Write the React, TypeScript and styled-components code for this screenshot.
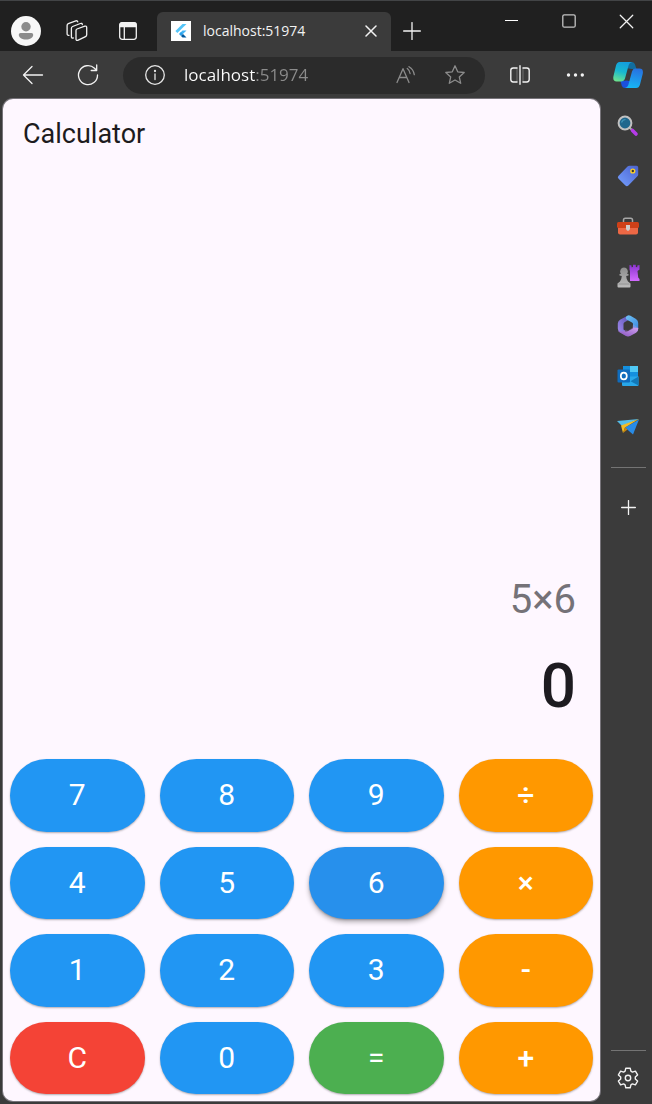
import React, { useState } from "react";
import styled, { createGlobalStyle } from "styled-components";

const GlobalStyle = createGlobalStyle`
  *, *::before, *::after { box-sizing: border-box; }
  html { background: #3b3b3b; }
  body { margin: 0; font-family: "Open Sans", "Noto Sans", sans-serif; }
  button { font: inherit; color: inherit; border: 0; padding: 0; background: none; cursor: pointer; }
  svg { display: block; flex: none; }
`;

const Browser = styled.div`
  display: flex;
  flex-direction: column;
  min-height: 100vh;
  background: #3b3b3b;
  color: #f2f2f2;
`;

const TabStrip = styled.header`
  display: flex;
  height: 51px;
  background: #202020;
  border-top: 1px solid #424446;
`;

const StripButton = styled.button<{ $width?: number }>`
  display: flex;
  align-items: center;
  justify-content: center;
  width: ${(p) => p.$width ?? 51}px;
  padding-top: 10px;
`;

const Tab = styled.div`
  display: flex;
  align-items: center;
  flex: 0 1 234px;
  min-width: 0;
  margin: 11px 0 0 4px;
  padding: 0 10px 2px 14px;
  background: #3b3b3b;
  border-radius: 6px 6px 0 0;
`;

const TabTitle = styled.span`
  flex: 1;
  min-width: 0;
  margin-left: 12px;
  overflow: hidden;
  white-space: nowrap;
  font-size: 14px;
  line-height: 20px;
`;

const TabClose = styled.button`
  display: grid;
  place-items: center;
  width: 20px;
  height: 20px;
`;

const WindowControls = styled.div`
  display: flex;
  gap: 5px;
  height: 40px;
  margin-left: auto;
`;

const WindowButton = styled.button`
  display: grid;
  place-items: center;
  width: 52px;
`;

const Toolbar = styled.nav`
  display: flex;
  align-items: center;
  height: 48px;
  padding-left: 5px;
`;

const ToolButton = styled.button<{ $width: number }>`
  display: grid;
  place-items: center;
  flex: none;
  width: ${(p) => p.$width}px;
  height: 40px;
`;

const AddressBar = styled.div`
  display: flex;
  align-items: center;
  flex: 1;
  min-width: 0;
  height: 37px;
  margin: 0 9px 0 8px;
  padding: 0 6px 0 22px;
  border-radius: 19px;
  background: #2b2b2b;
  color: #8c8c8c;
`;

const AddressInput = styled.input`
  flex: 1;
  min-width: 0;
  height: 28px;
  margin-left: 19px;
  padding: 0 0 2px;
  border: 0;
  outline: 0;
  font-family: inherit;
  font-size: 17px;
  color: #ffffff;
  background: linear-gradient(90deg, #ffffff 72px, #8c8c8c 72px);
  background-clip: text;
  -webkit-text-fill-color: transparent;
`;

const Content = styled.div`
  display: flex;
  flex: 1;
`;

const Page = styled.main`
  display: flex;
  flex-direction: column;
  flex: 1;
  min-width: 0;
  margin: 0 0 3px 3px;
  border-radius: 10px;
  background: #fef7ff;
  box-shadow: 0 0 0 1px #77747a;
  color: #1d1b20;
  font-family: Roboto, sans-serif;
`;

const AppTitle = styled.h1`
  margin: 0;
  padding: 19px 20px;
  font-size: 27px;
  font-weight: 400;
  line-height: 32px;
`;

const Display = styled.section`
  display: flex;
  flex-direction: column;
  justify-content: flex-end;
  align-items: flex-end;
  flex: 1;
  padding: 24px;
`;

const Expression = styled.div`
  font-size: 40px;
  line-height: 48px;
  color: #757278;
`;

const Result = styled.output`
  margin: 26px 0 6px;
  font-size: 62px;
  font-weight: 500;
  line-height: 72px;
`;

const Keypad = styled.section`
  display: grid;
  grid-template-columns: repeat(4, 1fr);
  grid-auto-rows: 1fr;
  gap: 15px;
  height: 349px;
  padding: 7px;
`;

const tones = {
  digit: "#2196f3",
  operator: "#ff9800",
  clear: "#f44336",
  equals: "#4caf50",
};
type Tone = keyof typeof tones;

const Key = styled.button<{ $tone: Tone; $active: boolean }>`
  border-radius: 40px;
  background: ${(p) => (p.$active ? "#2790ec" : tones[p.$tone])};
  color: #ffffff;
  font-size: 30px;
  font-weight: ${(p) => (p.$tone === "operator" ? 500 : 400)};
  line-height: 36px;
  box-shadow: ${(p) =>
    p.$active
      ? "0 3px 5px rgba(0, 0, 0, 0.3), 0 1px 2px rgba(0, 0, 0, 0.2)"
      : "0 1px 2px rgba(0, 0, 0, 0.3)"};
`;

const Sidebar = styled.aside`
  display: flex;
  flex-direction: column;
  align-items: center;
  width: 52px;
  padding: 2px 0 1px 4px;
`;

const SideLink = styled.a`
  display: grid;
  place-items: center;
  width: 48px;
  height: 50px;
`;

const SideButton = styled.button`
  display: grid;
  place-items: center;
  width: 48px;
  height: 50px;
`;

const Rule = styled.hr<{ $bottom?: boolean }>`
  width: 35px;
  height: 1px;
  margin: ${(p) => (p.$bottom ? "auto 0 2px" : "16px 0 14px")};
  border: 0;
  background: #747474;
`;

const line = { fill: "none", stroke: "currentColor", strokeLinecap: "round", strokeLinejoin: "round" } as const;

const Avatar = () => (
  <svg width="30" height="30" viewBox="0 0 30 30">
    <circle cx="15" cy="15" r="15" fill="#f7f7f7" />
    <circle cx="15" cy="10.800" r="4.700" fill="#8b8b8b" />
    <path d="M9.500 17h11a1.700 1.700 0 0 1 1.700 1.700c0 3-3.200 4.800-7.200 4.800s-7.200-1.800-7.200-4.800A1.700 1.700 0 0 1 9.500 17z" fill="#8b8b8b" />
  </svg>
);

const Workspaces = () => (
  <svg width="22" height="22" viewBox="0 0 22 22" {...line} strokeWidth="1.300">
    <path d="M11 9 18.800 6.200q1.900-.5 1.900 1.300v7.300q0 1.200-1.200 1.800l-7.800 3.700q-1.700.6-1.700-1.200v-8.500q0-1.200 1-1.600z" />
    <path d="M7.300 18q-1.900.4-1.900-1.300V8.200q0-1.200 1.200-1.700l7.800-3q1.700-.6 1.900 1" />
    <path d="M3 15.300q-1.900.3-1.900-1.500V5.400q0-1.200 1.200-1.700L9.800.9q1.500-.5 1.900.9" />
  </svg>
);

const TabActions = () => (
  <svg width="18" height="18" viewBox="0 0 18 18" {...line} strokeWidth="1.300">
    <rect x=".7" y=".7" width="16.600" height="16.600" rx="2.500" />
    <path d="M1 4.500V2.500Q1 1 2.500 1h13Q17 1 17 2.500v2z" fill="currentColor" />
    <path d="M5.300 4.500V17" />
  </svg>
);

const Flutter = () => (
  <svg width="20" height="20" viewBox="0 0 20 20">
    <path fill="#fff" d="M0 0h20v20H0z" />
    <path fill="#54c5f8" d="M11.500 3h4L6.400 12.100l-2-2z" />
    <path fill="#42b4f5" d="M11.500 9.500h4l-3.600 3.600-3.300-.6z" />
    <path fill="#29a0ea" d="m8 13 2-2 2 2-2 2z" />
    <path fill="#01579b" d="m10 15 2-2 3.500 3.500h-4z" />
  </svg>
);

const Cross = ({ size, width = 1.3 }: { size: number; width?: number }) => (
  <svg width={size} height={size} viewBox="0 0 12 12" {...line} strokeWidth={width}>
    <path d="m1 1 10 10M11 1 1 11" />
  </svg>
);

const Plus = ({ size }: { size: number }) => (
  <svg width={size} height={size} viewBox={`0 0 ${size} ${size}`} {...line} strokeWidth="1.300">
    <path d={`M${size / 2} .6V${size - 0.6}M.6 ${size / 2}H${size - 0.6}`} />
  </svg>
);

const Back = () => (
  <svg width="22" height="20" viewBox="0 0 22 20" {...line} strokeWidth="1.300">
    <path d="M20.500 10H1.500M10 1.500 1.500 10l8.500 8.500" />
  </svg>
);

const Reload = () => (
  <svg width="22" height="22" viewBox="0 0 22 22" {...line} strokeWidth="1.300">
    <path d="M20.500 11A9.500 9.500 0 1 1 17.500 4.200L19.500 6.300M19.700 1v5.500h-5.500" />
  </svg>
);

const Info = () => (
  <svg width="20" height="20" viewBox="0 0 20 20" {...line} stroke="#e6e6e6" strokeWidth="1.300">
    <circle cx="10" cy="10" r="9.300" />
    <path d="M10 9v5.500" />
    <circle cx="10" cy="6" r=".5" fill="#e6e6e6" />
  </svg>
);

const ReadAloud = () => (
  <svg width="20" height="19" viewBox="0 0 20 19" {...line} strokeWidth="1.300">
    <path d="M1 16.500 7 2.700l6 13.800M3.200 11.500h7.600" />
    <path d="M11.300 2.500q2.400 1.800 2.800 5M13 .7q4.500 2.600 5.300 8" />
  </svg>
);

const Star = () => (
  <svg width="22" height="22" viewBox="0 0 22 22" {...line} strokeWidth="1.300">
    <path d="m11 1.800 2.700 6 6.500.7-4.900 4.400 1.400 6.400-5.700-3.300-5.700 3.300 1.400-6.400L1.800 8.500l6.500-.7z" />
  </svg>
);

const SplitScreen = () => (
  <svg width="20" height="20" viewBox="0 0 20 20" {...line} strokeWidth="1.400">
    <path d="M7 3H3.200A2.400 2.400 0 0 0 .8 5.400v9.200A2.400 2.400 0 0 0 3.200 17H7M13 3h3.800a2.400 2.400 0 0 1 2.400 2.400v9.200a2.400 2.400 0 0 1-2.400 2.400H13M10 .7v18.600" />
    <path d="M7 3v14M13 3v14" strokeWidth=".3" />
  </svg>
);

const Dots = () => (
  <svg width="18" height="4" viewBox="0 0 18 4" fill="currentColor">
    <circle cx="2.500" cy="2" r="1.700" />
    <circle cx="9.500" cy="2" r="1.700" />
    <circle cx="16.300" cy="2" r="1.700" />
  </svg>
);

const Copilot = () => (
  <svg width="30" height="28" viewBox="0 0 30 28">
    <defs>
      <linearGradient id="cpLeft" x1=".6" y1="0" x2=".3" y2="1">
        <stop offset="0" stopColor="#139ddf" />
        <stop offset=".5" stopColor="#18b8cf" />
        <stop offset="1" stopColor="#6be28f" />
      </linearGradient>
      <linearGradient id="cpRight" x1=".6" y1="0" x2=".4" y2="1">
        <stop offset="0" stopColor="#2871e0" />
        <stop offset="1" stopColor="#16b6f5" />
      </linearGradient>
    </defs>
    <path d="M15 1h4q2.200 0 3 2.500L23.500 8h-5L13 7z" fill="#126d9e" />
    <path d="M15 27h-3q-2.500 0-3.300-2.500L7.500 20l6.500-.500 4 1z" fill="#1b50dc" />
    <path d="M6.500 1H19q-2.500.3-3.300 3L12 17.500Q11 20.500 8 20.500H3.500Q-.6 20.500.5 15L3 4.500Q4 1 6.500 1z" fill="url(#cpLeft)" />
    <path d="M22 7.500h4.500Q30.800 7.500 29.700 13L27 23.500q-1 3.500-3.800 3.500H12q2.500-.4 3.300-3L19 10.500q.8-3 3-3z" fill="url(#cpRight)" />
  </svg>
);

const SearchArt = () => (
  <svg width="22" height="22" viewBox="0 0 22 22">
    <path d="m12.500 12.500 3 3" stroke="#a8a8a8" strokeWidth="2" />
    <path d="m15.500 15.500 3.500 3.500" stroke="#b63be8" strokeWidth="3.600" strokeLinecap="round" />
    <circle cx="8" cy="8" r="6.400" fill="#20678d" stroke="#c1c1c1" strokeWidth="2" />
    <path d="M4.500 7.500Q5.500 4.500 8.500 4.500" stroke="#4195b8" fill="none" strokeWidth="1.200" />
  </svg>
);

const TagArt = () => (
  <svg width="22" height="22" viewBox="0 0 22 22">
    <defs>
      <linearGradient id="tag" x1="1" y1="0" x2="0" y2="1">
        <stop offset="0" stopColor="#4b62ce" />
        <stop offset="1" stopColor="#75a0ff" />
      </linearGradient>
    </defs>
    <path d="M12.500.8h7q1.700 0 1.700 1.700v7q0 1-.8 1.800l-9 9.300q-1.500 1.300-3 0l-7-7q-1.200-1.300 0-2.700L10.500 1.600Q11.300.8 12.500.8z" fill="url(#tag)" />
    <circle cx="15.800" cy="6" r="1.900" fill="#333" stroke="#ffd126" strokeWidth="1.400" />
  </svg>
);

const ToolboxArt = () => (
  <svg width="24" height="18" viewBox="0 0 24 18">
    <path d="M7.500 5V3q0-1.800 1.800-1.800h5.400q1.800 0 1.800 1.800v2" fill="none" stroke="#a7a7a7" strokeWidth="1.500" />
    <path d="M2 9h20v6.500q0 2-2 2H4q-2 0-2-2z" fill="#ed6845" />
    <path d="M2.500 5h19q1.500 0 1.500 1.500v3Q23 11 21.500 11h-19Q1 11 1 9.500v-3Q1 5 2.500 5z" fill="#cf4018" />
    <path d="M10 8h4v3.500q0 1.500-2 2.500-2-1-2-2.500z" fill="#d0cccb" />
  </svg>
);

const ChessArt = () => (
  <svg width="24" height="24" viewBox="0 0 24 24">
    <defs>
      <linearGradient id="rook" x1="0" y1="0" x2="0" y2="1">
        <stop offset="0" stopColor="#8c35d0" />
        <stop offset="1" stopColor="#d36bff" />
      </linearGradient>
      <linearGradient id="pawn" x1="0" y1="0" x2="0" y2="1">
        <stop offset="0" stopColor="#8d8d8d" />
        <stop offset="1" stopColor="#bcbcbc" />
      </linearGradient>
    </defs>
    <path d="M13.500 1l2 .4v1.800l1.500-.2V.8h2.800V3l1.500.2V1.400l2.200-.4v4.500l-2 1.500.7 6.500 1.300 1.500v2h-9.500V7L13.500 5.500z" fill="url(#rook)" />
    <g fill="url(#pawn)">
      <path d="M8 3.500a3.800 3.800 0 0 1 3 6.200l1.500.3v1.500l-2.300.5q.2 3.500 1.800 5.500l2.500 2v3q0 1-1 1H2.500q-1 0-1-1v-3l2.500-2q1.600-2 1.800-5.500l-2.300-.5V10l1.500-.3A3.800 3.800 0 0 1 8 3.500z" />
    </g>
    <path d="M2.500 20h11" stroke="#8d8d8d" strokeWidth=".8" />
  </svg>
);

const OfficeArt = () => (
  <svg width="22" height="22" viewBox="0 0 22 22">
    <defs>
      <linearGradient id="officeA" x1="0" y1="0" x2="1" y2="1">
        <stop offset="0" stopColor="#6fc3f5" />
        <stop offset="1" stopColor="#3a86dc" />
      </linearGradient>
      <linearGradient id="officeB" x1="0" y1="1" x2="1" y2="0">
        <stop offset="0" stopColor="#8451bd" />
        <stop offset="1" stopColor="#d3a2f0" />
      </linearGradient>
      <linearGradient id="officeC" x1="1" y1="0" x2="0" y2="1">
        <stop offset="0" stopColor="#5a55b5" />
        <stop offset="1" stopColor="#a58cf0" />
      </linearGradient>
    </defs>
    <path d="M11 .4 3 4.800Q.8 6.200.8 8.500v5Q.8 16 3 17l5 2.500v-4l-1.500-1V9q0-1 1-1.800L11.500 5z" fill="url(#officeC)" />
    <path d="M11 .4q1.300-.3 2.500.4L19 4q2.200 1.300 2.200 4v5.500q0 1.500-1 2.500l-4.200-2.500V9q0-1-1-1.600L9.500 4.500Q7.500 2 11 .4z" fill="url(#officeA)" />
    <path d="M21.200 12.500V14q0 2.500-2.200 3.700l-6 3.300q-2 .8-4 0l-6.500-3.800q-1-.6-1.400-1.400 2.400 1.200 4.900.2L14.500 11.500q1.300-.8 1.500-2z" fill="url(#officeB)" opacity=".3" />
    <path d="M21.200 13v1q0 2.500-2.200 3.700l-6 3.300q-2 .8-4 0l-6.500-3.800q-1-.6-1.400-1.400 2.400 1.500 4.900.7h4l5-2.500q1-.5 1-1.500z" fill="url(#officeB)" />
    <path d="m11.300 6.300 4.200 2.500v3.700l-4.500 3.200-4-2.200V9z" fill="#3b3b3b" />
  </svg>
);

const OutlookArt = () => (
  <svg width="22" height="22" viewBox="0 0 22 22">
    <path d="M6 1h15v12H6z" fill="#1490df" />
    <path d="M13 1h8v6h-8z" fill="#50c9f5" />
    <path d="M6 7h7v5H6z" fill="#0364b8" />
    <path d="M5 11.500h16.500V20q0 1-1 1H6q-1 0-1-1z" fill="#28a8ea" />
    <path d="m21.500 11.500-8 4.700 8 4.300z" fill="#1278b8" />
    <rect x=".5" y="4.500" width="12.500" height="13" rx="1" fill="#0f6cbd" />
    <ellipse cx="6.800" cy="11" rx="3" ry="3.400" fill="none" stroke="#fff" strokeWidth="1.700" />
  </svg>
);

const PlaneArt = () => (
  <svg width="24" height="18" viewBox="0 0 24 18">
    <path d="M1 4 23 2 6 9z" fill="#54bde9" />
    <path d="m9 10.500 14-8-6 15z" fill="#288be6" />
    <path d="M23 2 5 8.500l2 7.500 2-5.500z" fill="#f4bd24" />
    <path d="m7 16 2-5.500 2.500 2z" fill="#c8860c" />
  </svg>
);

const Gear = () => (
  <svg width="22" height="22" viewBox="0 0 22 22" {...line} strokeWidth="1.400">
    <path d="M8.800 1.200h4.400l.7 3 1.500.9 3-1 2.200 3.800L18.300 10v2l2.300 2.100-2.200 3.800-3-1-1.500.9-.7 3H8.800l-.7-3-1.500-.9-3 1-2.200-3.800L3.700 12v-2L1.400 7.900l2.200-3.800 3 1 1.500-.9z" />
    <circle cx="11" cy="11" r="2.700" />
  </svg>
);

const keys: [string, Tone][] = [
  ["7", "digit"], ["8", "digit"], ["9", "digit"], ["÷", "operator"],
  ["4", "digit"], ["5", "digit"], ["6", "digit"], ["×", "operator"],
  ["1", "digit"], ["2", "digit"], ["3", "digit"], ["-", "operator"],
  ["C", "clear"], ["0", "digit"], ["=", "equals"], ["+", "operator"],
];

const sideApps: [string, () => React.JSX.Element][] = [
  ["Search", SearchArt],
  ["Shopping", TagArt],
  ["Tools", ToolboxArt],
  ["Games", ChessArt],
  ["Microsoft 365", OfficeArt],
  ["Outlook", OutlookArt],
  ["Drop", PlaneArt],
];

function evaluate(text: string): string {
  const parts = text.match(/\d+|[÷×+-]/g) ?? [];
  const terms: number[] = [];
  let op = "+";
  for (const part of parts) {
    if (!/\d/.test(part)) {
      op = part;
      continue;
    }
    const n = Number(part);
    if (op === "+") terms.push(n);
    else if (op === "-") terms.push(-n);
    else {
      const last = terms.pop() ?? 0;
      terms.push(op === "×" ? last * n : last / n);
    }
  }
  return String(terms.reduce((a, b) => a + b, 0));
}

export default function App() {
  const [address, setAddress] = useState("localhost:51974");
  const [expression, setExpression] = useState("5×6");
  const [result, setResult] = useState("0");
  const [active, setActive] = useState("6");

  const press = (key: string) => {
    setActive(key);
    if (key === "C") {
      setExpression("");
      setResult("0");
    } else if (key === "=") setResult(evaluate(expression));
    else setExpression(expression + key);
  };

  return (
    <Browser>
      <GlobalStyle />
      <TabStrip>
        <StripButton aria-label="Profile"><Avatar /></StripButton>
        <StripButton aria-label="Workspaces"><Workspaces /></StripButton>
        <StripButton aria-label="Tab actions"><TabActions /></StripButton>
        <Tab>
          <Flutter />
          <TabTitle>localhost:51974</TabTitle>
          <TabClose aria-label="Close tab"><Cross size={12} width={1.5} /></TabClose>
        </Tab>
        <StripButton $width={42} aria-label="New tab"><Plus size={18} /></StripButton>
        <WindowControls>
          <WindowButton aria-label="Minimize">
            <svg width="14" height="2" viewBox="0 0 14 2"><path d="M0 .5h13" stroke="#fff" /></svg>
          </WindowButton>
          <WindowButton aria-label="Maximize">
            <svg width="14" height="14" viewBox="0 0 14 14"><rect x=".8" y=".8" width="12.400" height="12.400" rx="1.500" fill="none" stroke="#c4c4c4" strokeWidth="1.300" /></svg>
          </WindowButton>
          <WindowButton aria-label="Close"><Cross size={15} width={1} /></WindowButton>
        </WindowControls>
      </TabStrip>
      <Toolbar>
        <ToolButton $width={55} aria-label="Back"><Back /></ToolButton>
        <ToolButton $width={55} aria-label="Reload"><Reload /></ToolButton>
        <AddressBar>
          <Info />
          <AddressInput aria-label="Address" value={address} onChange={(e) => setAddress(e.target.value)} />
          <ToolButton $width={49} aria-label="Read aloud"><ReadAloud /></ToolButton>
          <ToolButton $width={49} aria-label="Add to favorites"><Star /></ToolButton>
        </AddressBar>
        <ToolButton $width={52} aria-label="Split screen"><SplitScreen /></ToolButton>
        <ToolButton $width={58} aria-label="More"><Dots /></ToolButton>
        <ToolButton $width={48} aria-label="Copilot"><Copilot /></ToolButton>
      </Toolbar>
      <Content>
        <Page>
          <AppTitle>Calculator</AppTitle>
          <Display>
            <Expression>{expression}</Expression>
            <Result>{result}</Result>
          </Display>
          <Keypad>
            {keys.map(([label, tone]) => (
              <Key key={label} $tone={tone} $active={active === label} onClick={() => press(label)}>
                {label}
              </Key>
            ))}
          </Keypad>
        </Page>
        <Sidebar>
          {sideApps.map(([name, Art]) => (
            <SideLink key={name} href="#" aria-label={name}><Art /></SideLink>
          ))}
          <Rule />
          <SideButton aria-label="Customize"><Plus size={15} /></SideButton>
          <Rule $bottom />
          <SideButton aria-label="Settings"><Gear /></SideButton>
        </Sidebar>
      </Content>
    </Browser>
  );
}
